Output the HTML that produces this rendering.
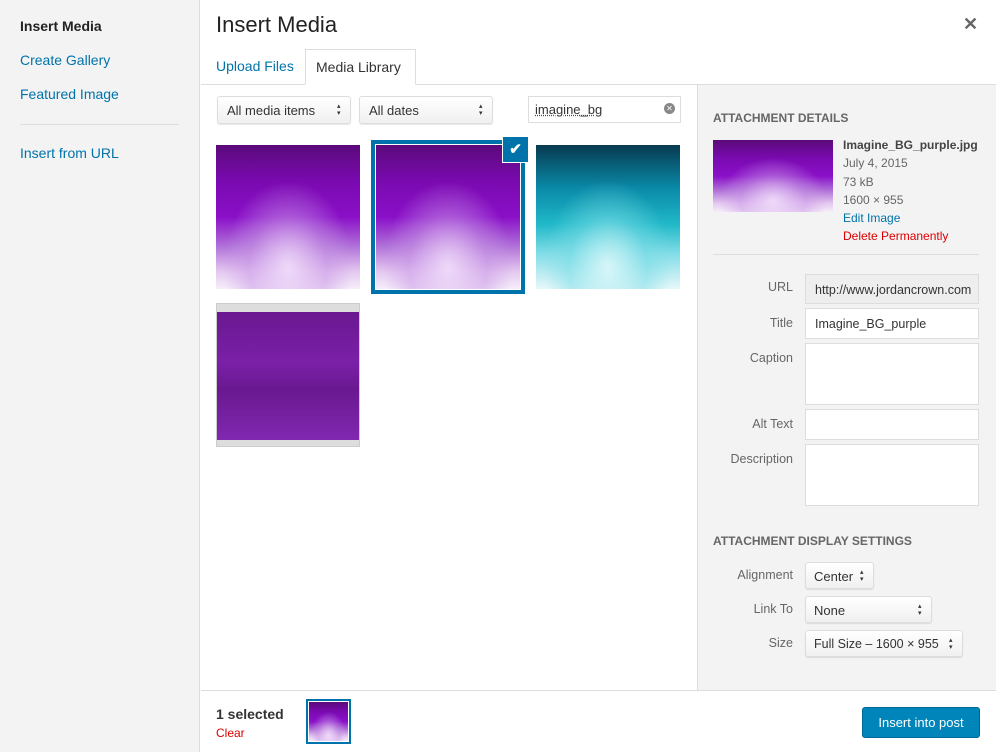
<!DOCTYPE html>
<html><head><style>
*{box-sizing:border-box;margin:0;padding:0}
body{width:996px;height:752px;position:relative;font-family:"Liberation Sans",sans-serif;font-size:13px;color:#444;background:#fff;overflow:hidden}
.a{position:absolute}
.side{left:0;top:0;width:200px;height:752px;background:#f3f3f3;border-right:1px solid #ddd}
.side div{position:absolute;left:20px;font-size:14px;color:#0073aa}
.pur{background:radial-gradient(ellipse 45% 60% at 50% 85%,rgba(240,220,250,.9),rgba(200,150,230,.5) 60%,rgba(160,80,210,0) 100%),linear-gradient(180deg,#5a0a7a 0%,#7a0ab0 25%,#8a10c8 50%,#b070d8 70%,#e4c8f0 88%,#f6eefa 100%)}
.cy{background:radial-gradient(ellipse 45% 60% at 50% 85%,rgba(220,248,250,.9),rgba(120,220,230,.5) 60%,rgba(60,190,210,0) 100%),linear-gradient(180deg,#083a50 0%,#0a8aa8 30%,#20b8c8 55%,#80dce6 75%,#e8f8fa 100%)}
.sel{border:1px solid #ddd;background:linear-gradient(#fff,#f0f0f0);border-radius:3px;height:28px;padding:6px 9px;font-size:13px;color:#333;box-shadow:0 1px 1px rgba(0,0,0,.1)}
.sel:after{content:"▴▾";position:absolute;right:7px;top:6px;font-size:7px;line-height:7px;width:6px;word-break:break-all}
.lab{position:absolute;right:203px;font-size:12.5px;color:#666;text-align:right}
.inp{position:absolute;left:805px;width:174px;background:#fff;border:1px solid #ddd;font-size:12.5px;padding:8px 9px;color:#333}
</style></head><body>
<div class="a side">
<div style="top:18px;color:#222;font-weight:bold">Insert Media</div>
<div style="top:52px">Create Gallery</div>
<div style="top:86px">Featured Image</div>
<div style="top:124px;width:159px;height:1px;background:#ddd;left:20px"></div>
<div style="top:145px">Insert from URL</div>
</div>
<div class="a" style="left:216px;top:12px;font-size:22px;color:#222">Insert Media</div>
<div class="a" style="left:963px;top:14px;font-size:18px;color:#666;font-weight:bold">✕</div>
<div class="a" style="left:201px;top:84px;width:795px;height:1px;background:#ddd"></div>
<div class="a" style="left:216px;top:58px;font-size:14px;color:#0073aa">Upload Files</div>
<div class="a" style="left:305px;top:49px;width:111px;height:36px;border:1px solid #ddd;border-bottom:1px solid #fff;background:#fff;font-size:14px;color:#333;padding:9px 10px">Media Library</div>
<div class="a sel" style="left:217px;top:96px;width:134px">All media items</div>
<div class="a sel" style="left:359px;top:96px;width:134px">All dates</div>
<div class="a" style="left:528px;top:96px;width:153px;height:27px;border:1px solid #ddd;padding:5px 6px;font-size:13px;color:#333"><span style="text-decoration:underline dotted red">imagine_bg</span><span style="position:absolute;right:5px;top:6px;width:11px;height:11px;border-radius:50%;background:#888;color:#fff;font-size:8px;text-align:center;line-height:11px">✕</span></div>
<div class="a pur" style="left:216px;top:145px;width:144px;height:144px"></div>
<div class="a" style="left:371px;top:140px;width:154px;height:154px;border:4px solid #0073aa;padding:1px;background:#fff"><div class="pur" style="width:100%;height:100%"></div></div>
<div class="a" style="left:502px;top:136px;width:27px;height:27px;background:#0073aa;border:1px solid #fff;color:#fff;text-align:center;font-size:15px;line-height:25px;font-weight:bold">✔</div>
<div class="a cy" style="left:536px;top:145px;width:144px;height:144px"></div>
<div class="a" style="left:216px;top:303px;width:144px;height:144px;background:#ddd;border:1px solid #ccc"><div style="margin-top:8px;height:128px;background:linear-gradient(180deg,#6a1890,#7a20a8 40%,#6a1890 60%,#8028b0)"></div></div>
<div class="a" style="left:697px;top:85px;width:299px;height:605px;background:#f3f3f3;border-left:1px solid #ddd"></div>
<div class="a" style="left:713px;top:111px;font-size:12px;font-weight:bold;color:#666">ATTACHMENT DETAILS</div>
<div class="a pur" style="left:713px;top:140px;width:120px;height:72px"></div>
<div class="a" style="left:843px;top:136px;font-size:12px;line-height:18.3px;color:#666">
<b style="color:#444">Imagine_BG_purple.jpg</b><br>July 4, 2015<br>73 kB<br>1600 × 955<br><span style="color:#0073aa">Edit Image</span><br><span style="color:#d00">Delete Permanently</span></div>
<div class="a" style="left:713px;top:254px;width:266px;height:1px;background:#ddd"></div>
<div class="lab" style="top:280px">URL</div><div class="inp" style="top:274px;height:30px;background:#eee;overflow:hidden;white-space:nowrap">http://www.jordancrown.com</div>
<div class="lab" style="top:316px">Title</div><div class="inp" style="top:308px;height:31px">Imagine_BG_purple</div>
<div class="lab" style="top:351px">Caption</div><div class="inp" style="top:343px;height:62px"></div>
<div class="lab" style="top:417px">Alt Text</div><div class="inp" style="top:409px;height:31px"></div>
<div class="lab" style="top:452px">Description</div><div class="inp" style="top:444px;height:62px"></div>
<div class="a" style="left:713px;top:534px;font-size:12px;font-weight:bold;color:#666">ATTACHMENT DISPLAY SETTINGS</div>
<div class="lab" style="top:568px">Alignment</div><div class="a sel" style="left:805px;top:562px;width:69px;height:27px;padding:6px 8px">Center</div>
<div class="lab" style="top:602px">Link To</div><div class="a sel" style="left:805px;top:596px;width:127px;height:27px;padding:6px 8px">None</div>
<div class="lab" style="top:636px">Size</div><div class="a sel" style="left:805px;top:630px;width:158px;height:27px;padding:6px 8px;font-size:12.5px">Full Size – 1600 × 955</div>
<div class="a" style="left:201px;top:690px;width:795px;height:1px;background:#ddd"></div>
<div class="a" style="left:216px;top:706px;font-size:14px;font-weight:bold;color:#333">1 selected</div>
<div class="a" style="left:216px;top:726px;font-size:12px;color:#d00">Clear</div>
<div class="a" style="left:306px;top:699px;width:45px;height:45px;border:2px solid #0073aa;padding:1px;background:#fff"><div class="pur" style="width:100%;height:100%"></div></div>
<div class="a" style="left:862px;top:707px;width:118px;height:31px;background:#0085ba;border:1px solid #006799;border-radius:3px;color:#fff;font-size:13px;text-align:center;line-height:29px">Insert into post</div>
</body></html>
